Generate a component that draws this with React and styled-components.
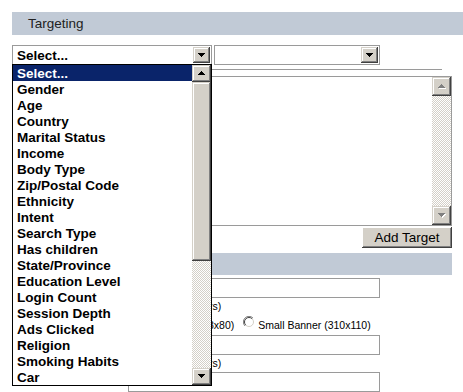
import React from "react";
import styled, { createGlobalStyle } from "styled-components";

const Global = createGlobalStyle`
  html, body { margin: 0; padding: 0; background: #fff; }
  body { font-family: "Liberation Sans", Arial, sans-serif; color: #000; }
`;

const Page = styled.div`
  position: relative;
  width: 463px;
  height: 392px;
  box-sizing: border-box;
  padding: 12px 0 0 12px;
  overflow: hidden;
`;

const SectionBar = styled.div`
  width: ${(p) => p.$w}px;
  height: ${(p) => p.$h}px;
  margin-top: ${(p) => p.$mt || 0}px;
  line-height: ${(p) => p.$h}px;
  background: #c1cad6;
  color: #222;
  font-size: 13.5px;
  padding-left: 16px;
  box-sizing: border-box;
`;

const SelectRow = styled.div`
  display: flex;
  gap: 2px;
  margin-top: 10px;
`;

const SelectBox = styled.div`
  width: ${(p) => p.$w}px;
  height: 20px;
  box-sizing: border-box;
  border: 1px solid #9a9a9a;
  padding: 1px;
  background: #fff;
  display: flex;
  align-items: stretch;
`;

const SelectText = styled.div`
  flex: 1;
  padding-left: 3px;
  font: bold 13.5px/17px "Liberation Sans", Arial, sans-serif;
  white-space: nowrap;
  overflow: hidden;
`;

const Bevel = styled.div`
  background: #d4d0c8;
  box-shadow: inset -1px -1px #404040, inset 1px 1px #d4d0c8,
    inset -2px -2px #808080, inset 2px 2px #fff;
  display: flex;
  align-items: center;
  justify-content: center;
  flex-shrink: 0;
`;

const DropBtn = styled(Bevel)`
  width: 17px;
`;

const Rule = styled.div`
  width: 430px;
  height: 1px;
  margin-top: 4px;
  background: #9a9a9a;
`;

const TextArea = styled.div`
  width: 440px;
  height: 150px;
  margin-top: 6px;
  box-sizing: border-box;
  border: 1px solid #9a9a9a;
  background: #fff;
  display: flex;
  justify-content: flex-end;
`;

const ScrollBar = styled.div`
  width: 19px;
  display: flex;
  flex-direction: column;
  flex-shrink: 0;
`;

const ScrollBtn = styled(Bevel)`
  height: ${(p) => p.$h}px;
`;

const Checker = styled.div`
  flex: 1;
  background-color: #fff;
  background-image: conic-gradient(#d4d0c8 25%, #fff 0 50%, #d4d0c8 0 75%, #fff 0);
  background-size: 2px 2px;
`;

const ButtonRow = styled.div`
  width: 440px;
  display: flex;
  justify-content: flex-end;
  margin-top: 1px;
`;

const PushButton = styled.button`
  width: 90px;
  height: 21px;
  padding: 0;
  border: none;
  background: #d4d0c8;
  box-shadow: inset -1px -1px #404040, inset 1px 1px #fff,
    inset -2px -2px #808080, inset 2px 2px #d4d0c8;
  font: 13.5px "Liberation Sans", Arial, sans-serif;
  color: #000;
`;

const Form = styled.div`
  display: grid;
  grid-template-columns: 116px 252px;
  margin-top: 3px;
  font: 10.5px "Liberation Sans", Arial, sans-serif;
`;

const Input = styled.div`
  height: ${(p) => p.$h}px;
  box-sizing: border-box;
  border: 1px solid #9a9a9a;
  background: #fff;
`;

const Hint = styled.div`
  height: ${(p) => p.$h}px;
  line-height: ${(p) => p.$h}px;
  white-space: nowrap;
`;

const RadioRow = styled.div`
  height: 21px;
  display: flex;
  align-items: center;
  white-space: nowrap;
`;

const RadioOpt = styled.label`
  display: flex;
  align-items: center;
  margin-left: ${(p) => p.$ml || 0}px;
  svg { margin-right: 3px; position: relative; top: -3px; }
`;

const DropList = styled.div`
  position: absolute;
  left: 12px;
  top: 64px;
  width: 200px;
  height: 322px;
  box-sizing: border-box;
  border: 1px solid #000;
  background: #fff;
  display: flex;
`;

const Options = styled.div`
  flex: 1;
  display: flex;
  flex-direction: column;
`;

const Option = styled.div`
  height: 16px;
  padding-left: 4px;
  font: bold 13.5px/17px "Liberation Sans", Arial, sans-serif;
  white-space: nowrap;
  background: ${(p) => (p.$active ? "#0a246a" : "transparent")};
  color: ${(p) => (p.$active ? "#fff" : "#000")};
`;

const UP = "M3 0h1v1h1v1h1v1h1v1H0V3h1V2h1V1h1z";
const DOWN = "M0 0h7v1H6v1H5v1H4v1H3V3H2V2H1V1H0z";

const Arrow = ({ dir = "down", disabled }) => {
  const d = dir === "up" ? UP : DOWN;
  return (
    <svg width="8" height="5" viewBox="0 0 8 5">
      {disabled && <path d={d} fill="#fff" transform="translate(1 1)" />}
      <path d={d} fill={disabled ? "#808080" : "#000"} />
    </svg>
  );
};

const Radio = () => (
  <svg width="12" height="12" viewBox="0 0 12 12">
    <circle cx="6" cy="6" r="5.5" fill="#fff" />
    <path d="M10 2 A5.5 5.5 0 0 0 2 10" fill="none" stroke="#808080" strokeWidth="1" />
    <path d="M9.2 2.8 A4.5 4.5 0 0 0 2.8 9.2" fill="none" stroke="#404040" strokeWidth="1" />
    <path d="M10 2 A5.5 5.5 0 0 1 2 10" fill="none" stroke="#fff" strokeWidth="1" />
    <path d="M9.2 2.8 A4.5 4.5 0 0 1 2.8 9.2" fill="none" stroke="#d4d0c8" strokeWidth="1" />
  </svg>
);

const options = [
  "Select...", "Gender", "Age", "Country", "Marital Status", "Income",
  "Body Type", "Zip/Postal Code", "Ethnicity", "Intent", "Search Type",
  "Has children", "State/Province", "Education Level", "Login Count",
  "Session Depth", "Ads Clicked", "Religion", "Smoking Habits", "Car",
];

export default function App() {
  return (
    <Page>
      <Global />
      <SectionBar $w={451} $h={23}>Targeting</SectionBar>
      <SelectRow>
        <SelectBox $w={200}>
          <SelectText>Select...</SelectText>
          <DropBtn><Arrow dir="down" /></DropBtn>
        </SelectBox>
        <SelectBox $w={166}>
          <SelectText />
          <DropBtn><Arrow dir="down" /></DropBtn>
        </SelectBox>
      </SelectRow>
      <Rule />
      <TextArea>
        <ScrollBar>
          <ScrollBtn $h={19}><Arrow dir="up" disabled /></ScrollBtn>
          <Checker />
          <ScrollBtn $h={19}><Arrow dir="down" disabled /></ScrollBtn>
        </ScrollBar>
      </TextArea>
      <ButtonRow>
        <PushButton>Add Target</PushButton>
      </ButtonRow>
      <SectionBar $w={440} $h={22} $mt={5} />
      <Form>
        <div />
        <Input $h={20} />
        <div />
        <Hint $h={16}>(max 25 characters)</Hint>
        <div />
        <RadioRow>
          <RadioOpt $ml={13}><Radio />Banner (728x80)</RadioOpt>
          <RadioOpt $ml={9}><Radio />Small Banner (310x110)</RadioOpt>
        </RadioRow>
        <div />
        <Input $h={20} />
        <div />
        <Hint $h={17}>(max 90 characters)</Hint>
        <div />
        <Input $h={20} />
      </Form>
      <DropList>
        <Options>
          {options.map((o, i) => (
            <Option key={o} $active={i === 0}>{o}</Option>
          ))}
        </Options>
        <ScrollBar>
          <ScrollBtn $h={17}><Arrow dir="up" /></ScrollBtn>
          <ScrollBtn $h={179} />
          <Checker />
          <ScrollBtn $h={17}><Arrow dir="down" /></ScrollBtn>
        </ScrollBar>
      </DropList>
    </Page>
  );
}
